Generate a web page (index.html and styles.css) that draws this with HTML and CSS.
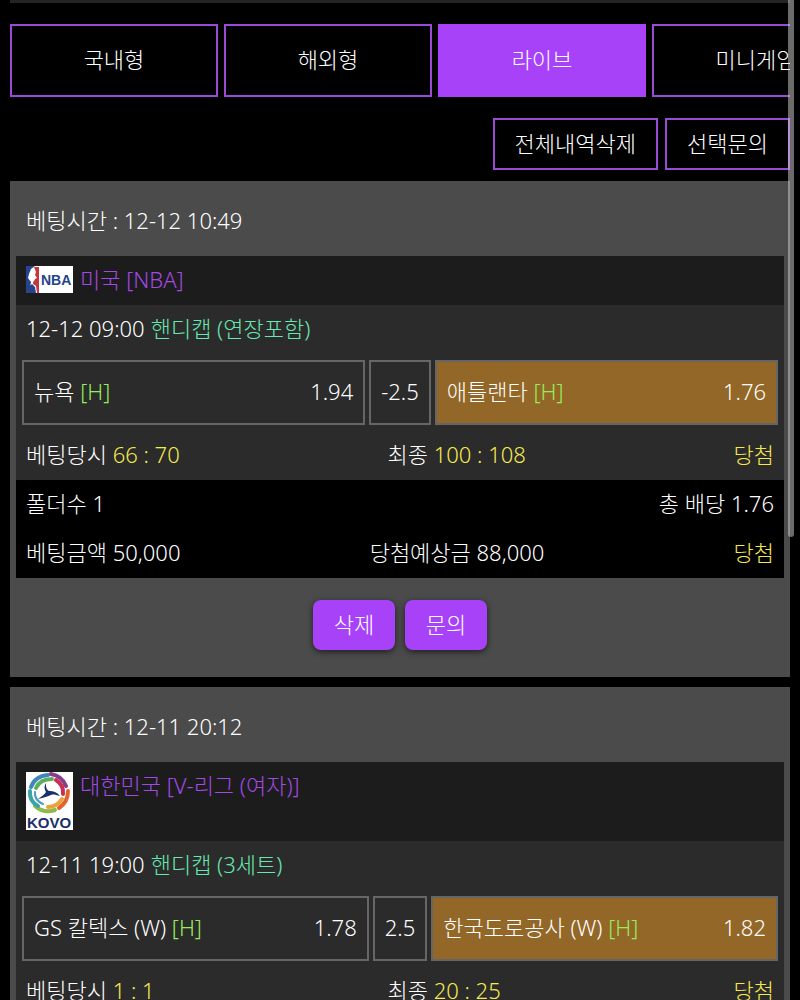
FILE: index.html
```html
<!DOCTYPE html>
<html lang="ko">
<head>
  <meta charset="UTF-8">
  <meta name="viewport" content="width=device-width, initial-scale=1.0">
  <title>베팅내역</title>
  <link rel="stylesheet" href="styles.css">
</head>
<body>
<div class="container">
  <nav class="tabs">
    <button class="tab">국내형</button>
    <button class="tab">해외형</button>
    <button class="tab active">라이브</button>
    <button class="tab">미니게임</button>
  </nav>

  <div class="actions">
    <button class="action">전체내역삭제</button>
    <button class="action">선택문의</button>
  </div>

  <section class="card">
    <div class="bet-time">베팅시간 : 12-12 10:49</div>
    <div class="league">
      <svg class="logo" width="47" height="27" viewBox="0 0 47 27">
        <rect width="47" height="27" fill="#fff"/>
        <path d="M0 0H9L5 3L3 8L2 12L5 16L4 21L1 27H0Z" fill="#24458c"/>
        <path d="M8 1H13V27H11L10 20L7 17L9 13L11 12L9 9L10 6Z" fill="#c2383f"/>
        <path d="M2 21L6 18L9 21L10 27H1Z" fill="#24458c"/>
        <circle cx="9" cy="17" r="2" fill="#c2383f"/>
        <text class="nba-text" x="15" y="19">NBA</text>
      </svg>
      <span>미국 [NBA]</span>
    </div>
    <div class="match">
      <div class="row start">12-12 09:00 <span class="market">핸디캡 (연장포함)</span></div>
      <div class="odds">
        <button class="team"><span>뉴욕 <span class="mark">[H]</span></span><span>1.94</span></button>
        <div class="line">-2.5</div>
        <button class="team picked"><span>애틀랜타 <span class="mark">[H]</span></span><span>1.76</span></button>
      </div>
      <div class="row">
        <span>베팅당시 <span class="yellow">66 : 70</span></span>
        <span>최종 <span class="yellow">100 : 108</span></span>
        <span class="yellow">당첨</span>
      </div>
    </div>
    <div class="summary">
      <div class="row">
        <span>폴더수 1</span>
        <span>총 배당 1.76</span>
      </div>
      <div class="row">
        <span>베팅금액 50,000</span>
        <span>당첨예상금 88,000</span>
        <span class="yellow">당첨</span>
      </div>
    </div>
    <div class="card-buttons">
      <button class="btn">삭제</button>
      <button class="btn">문의</button>
    </div>
  </section>

  <section class="card">
    <div class="bet-time">베팅시간 : 12-11 20:12</div>
    <div class="league">
      <svg class="logo" width="47" height="58" viewBox="0 0 47 58">
        <rect width="47" height="58" fill="#fff"/>
        <!-- ball panels -->
        <g fill="none" stroke-width="4" stroke-linecap="round">
          <path d="M5 15Q9 4 22 3" stroke="#3f86bd"/>
          <path d="M10 16Q14 7 26 7" stroke="#5fae5e"/>
          <path d="M25 2Q36 4 40 14" stroke="#8a3c8c"/>
          <path d="M30 8Q38 13 37 22" stroke="#c9304f"/>
          <path d="M42 19Q42 30 33 36" stroke="#e2632f"/>
          <path d="M36 27Q31 35 22 35" stroke="#eba23a"/>
          <path d="M29 38Q18 42 9 34" stroke="#8dbb4a"/>
          <path d="M4 19Q3 29 12 34" stroke="#37a6a4"/>
          <path d="M9 20Q8 28 17 32" stroke="#4f9ac4" stroke-width="2"/>
        </g>
        <path d="M20 11C20 15 20 17 23 19C27 19 31 20 34 24C30 23 27 22 25 23C22 24 18 26 12 27C16 24 19 22 20 20C18 17 18 14 20 11Z" fill="#1c2f68"/>
        <text class="kovo-text" x="1" y="56">KOVO</text>
      </svg>
      <span>대한민국 [V-리그 (여자)]</span>
    </div>
    <div class="match">
      <div class="row start">12-11 19:00 <span class="market">핸디캡 (3세트)</span></div>
      <div class="odds">
        <button class="team"><span>GS 칼텍스 (W) <span class="mark">[H]</span></span><span>1.78</span></button>
        <div class="line">2.5</div>
        <button class="team picked"><span>한국도로공사 (W) <span class="mark">[H]</span></span><span>1.82</span></button>
      </div>
      <div class="row">
        <span>베팅당시 <span class="yellow">1 : 1</span></span>
        <span>최종 <span class="yellow">20 : 25</span></span>
        <span class="yellow">당첨</span>
      </div>
    </div>
  </section>
</div>

<div class="scroll-thumb"></div>
</body>
</html>
```

FILE: styles.css
```css
* {
  box-sizing: border-box;
}

body {
  margin: 0;
  height: 100vh;
  overflow: hidden;
  background-color: #000;
  color: #fff;
  font-family: "Noto Sans", "Noto Sans CJK KR", sans-serif;
  font-size: 22px;
  font-weight: 300;
  line-height: 29px;
}

button {
  margin: 0;
  color: inherit;
  font: inherit;
  cursor: pointer;
}

.container {
  margin: 0 10px;
  border-top: 3px solid #242427;
}

.tabs {
  display: flex;
  gap: 6px;
  padding-top: 21px;
  overflow: hidden;
}

.tab {
  flex: 0 0 208px;
  height: 73px;
  padding: 0 0 2px;
  background-color: #000;
  border: 2px solid #9a4bd6;
}

.tab.active {
  background-color: #a742f8;
  border-color: #a742f8;
}

.actions {
  display: flex;
  justify-content: flex-end;
  gap: 7px;
  padding: 21px 0 11px;
}

.action {
  height: 52px;
  padding: 0 20px 2px;
  background-color: #000;
  border: 2px solid #9a4bd6;
}

.card {
  margin-bottom: 10px;
  padding: 0 6px;
  background-color: #4b4b4b;
}

.bet-time {
  padding: 25px 10px 21px;
}

.league {
  display: flex;
  align-items: flex-start;
  gap: 7px;
  padding: 9px 10px 11px;
  background-color: #1c1c1c;
  color: #a349e6;
}

.logo {
  display: block;
  flex: none;
  margin-top: 1px;
}

.nba-text {
  fill: #24458c;
  font-family: "Liberation Sans", sans-serif;
  font-size: 14px;
  font-weight: bold;
}

.kovo-text {
  fill: #1c2f68;
  font-family: "Liberation Sans", sans-serif;
  font-size: 15px;
  font-weight: bold;
}

.match {
  background-color: #2b2b2b;
}

.row {
  display: flex;
  justify-content: space-between;
  padding: 9px 10px 11px;
}

.row.start {
  justify-content: flex-start;
  gap: 6px;
}

.market {
  color: #66e8b0;
}

.mark {
  color: #96ec5a;
}

.yellow {
  color: #f5ea50;
}

.odds {
  display: flex;
  gap: 4px;
  padding: 6px;
}

.team,
.line {
  display: flex;
  align-items: center;
  justify-content: space-between;
  height: 65px;
  padding: 0 10px 2px;
  background-color: transparent;
  border: 2px solid #666;
}

.team {
  flex: 1;
}

.team.picked {
  background-color: #936727;
}

.summary {
  background-color: #000;
}

.card-buttons {
  display: flex;
  justify-content: center;
  gap: 10px;
  padding: 22px 0 27px;
}

.btn {
  width: 82px;
  height: 50px;
  padding: 0 0 2px;
  background-color: #a742f8;
  border: 0;
  border-radius: 8px;
  box-shadow: 0 2px 6px rgba(0, 0, 0, 0.6);
}

.scroll-thumb {
  position: absolute;
  top: -6px;
  right: 6px;
  width: 6px;
  height: 543px;
  border-radius: 3px;
  background-color: rgba(214, 214, 214, 0.5);
}
```
